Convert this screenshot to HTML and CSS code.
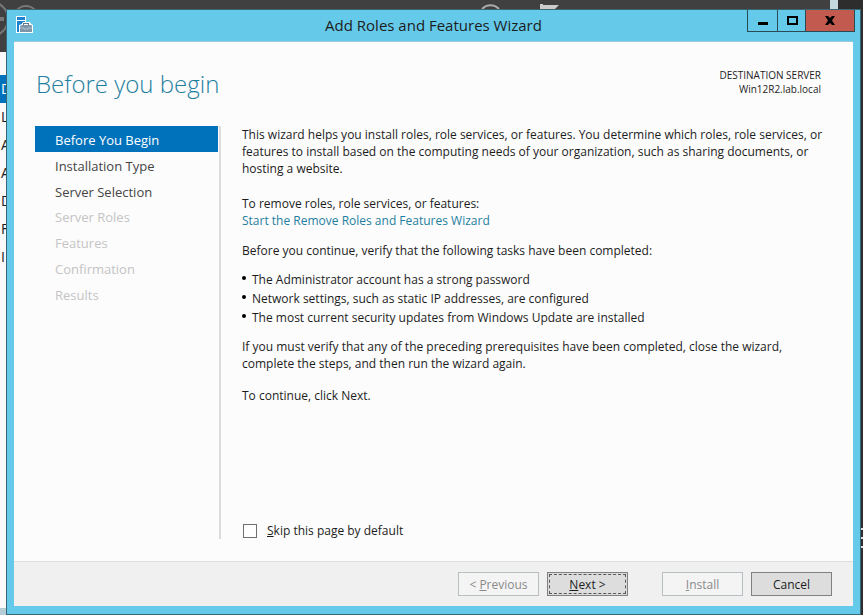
FILE: index.html
```html
<!DOCTYPE html>
<html lang="en">
<head>
<meta charset="utf-8">
<title>Add Roles and Features Wizard</title>
<meta name="viewport" content="width=device-width, initial-scale=1">
<link rel="stylesheet" href="styles.css">
</head>
<body>
<div class="backdrop" aria-hidden="true">
  <div class="backdrop-header">
    <svg class="backdrop-nav" viewBox="0 0 40 40" fill="none" stroke="#777">
      <circle cx="-9" cy="19" r="17" stroke-width="2"/>
      <path d="M-4 19H4" stroke-width="4"/>
      <circle cx="26" cy="18" r="12" stroke-width="2"/>
    </svg>
    <svg class="backdrop-tools" viewBox="0 0 90 12" fill="none">
      <path d="M2 9C7 4 14 4 19 9" stroke="#aaa" stroke-width="2"/>
      <path d="M60 4h3v1h16l-4 4H60z" fill="#ccc"/>
    </svg>
    <span class="backdrop-bar"></span>
  </div>
  <ul class="backdrop-list">
    <li class="selected">D</li><li>L</li><li>A</li><li>A</li><li>D</li><li>F</li><li>I</li>
  </ul>
  <div class="backdrop-status"></div>
  <div class="backdrop-edge"><i></i><i></i><i></i></div>
</div>

<main class="window">
  <header class="titlebar">
    <svg class="app-icon" viewBox="0 0 18 18">
      <path d="M0 0h10v6h-3v11H0z" fill="#fff"/>
      <path d="M1 1h8v3H1zM1 5h8v2H6v2H4v7H1z" fill="#1b83d0"/>
      <path d="M3 9l3-1 1-2h7l1 2 2 1v8H3z" fill="#fff"/>
      <path d="M4 10l2-1h9l1 1v6H4z" fill="#7c95a8"/>
      <path d="M7 9V7h6v2h-1V8H8v1z" fill="#607b90"/>
      <path d="M4 12h4v1h4v-1h4" fill="none" stroke="#b4c3ce"/>
    </svg>
    <h1 class="title">Add Roles and Features Wizard</h1>
    <div class="window-controls">
      <button class="control" aria-label="Minimize"><svg viewBox="0 0 12 12"><path d="M1 7h10v3H1z"/></svg></button>
      <button class="control maximize" aria-label="Maximize"><svg viewBox="0 0 12 12"><path d="M1 1h11v9H1zM3 3v5h7V3z" fill-rule="evenodd"/></svg></button>
      <button class="control close" aria-label="Close"><svg viewBox="0 0 12 12"><path d="M1 1h3l2 2 2-2h3L8 5.500l3 4.500H8L6 8l-2 2H1l3-4.500z"/></svg></button>
    </div>
  </header>

  <div class="client">
    <div class="page-head">
      <h2 class="page-title">Before you begin</h2>
      <p class="destination">DESTINATION SERVER<br>Win12R2.lab.local</p>
    </div>
    <div class="columns">
      <nav class="steps" aria-label="Wizard steps">
        <ol>
          <li class="current"><a href="#" aria-current="step">Before You Begin</a></li>
          <li><a href="#">Installation Type</a></li>
          <li><a href="#">Server Selection</a></li>
          <li class="pending">Server Roles</li>
          <li class="pending">Features</li>
          <li class="pending">Confirmation</li>
          <li class="pending">Results</li>
        </ol>
      </nav>
      <section class="content">
        <p class="intro">This wizard helps you install roles, role services, or features. You determine which roles, role services, or features to install based on the computing needs of your organization, such as sharing documents, or hosting a website.</p>
        <p class="remove">To remove roles, role services, or features:<br><a href="#">Start the Remove Roles and Features Wizard</a></p>
        <p>Before you continue, verify that the following tasks have been completed:</p>
        <ul class="tasks">
          <li>The Administrator account has a strong password</li>
          <li>Network settings, such as static IP addresses, are configured</li>
          <li>The most current security updates from Windows Update are installed</li>
        </ul>
        <p class="verify">If you must verify that any of the preceding prerequisites have been completed, close the wizard, complete the steps, and then run the wizard again.</p>
        <p>To continue, click Next.</p>
        <div class="skip">
          <input type="checkbox" id="skip">
          <label for="skip"><u>S</u>kip this page by default</label>
        </div>
      </section>
    </div>
    <footer class="actions">
      <div class="pair">
        <button class="btn" disabled>&lt; <u>P</u>revious</button>
        <button class="btn default"><u>N</u>ext &gt;</button>
      </div>
      <div class="pair">
        <button class="btn" disabled><u>I</u>nstall</button>
        <button class="btn">Cancel</button>
      </div>
    </footer>
  </div>
</main>
</body>
</html>
```
FILE: styles.css
```css
* {
  box-sizing: border-box;
}

body {
  margin: 0;
  min-height: 100vh;
  display: flex;
  padding: 9px 2px 0 6px;
  position: relative;
  overflow: hidden;
  font: 12px/17px "Open Sans", "Noto Sans", sans-serif;
  color: #1c1c1c;
  background: #f9f9f9;
}

h1, h2, p, ul, ol {
  margin: 0;
  padding: 0;
  font-weight: 400;
}

ul, ol {
  list-style: none;
}

a {
  color: inherit;
  text-decoration: none;
}

button, input {
  font: inherit;
  color: inherit;
  margin: 0;
}

/* Server Manager behind the wizard */
.backdrop {
  position: absolute;
  z-index: 0;
  inset: 0;
  display: flex;
  flex-direction: column;
}

.backdrop-header {
  position: relative;
  height: 52px;
  background: #404040;
}

.backdrop-nav {
  position: absolute;
  left: 0;
  top: 0;
  width: 40px;
  height: 40px;
}

.backdrop-tools {
  position: absolute;
  left: 480px;
  top: 0;
  width: 90px;
  height: 12px;
}

.backdrop-bar {
  position: absolute;
  right: 25px;
  top: 0;
  width: 8px;
  height: 12px;
  background: #c3d9df;
}

.backdrop-list {
  flex: 1;
  padding-top: 23px;
  font-size: 14px;
  line-height: 28px;
}

.backdrop-list li {
  padding-left: 1px;
}

.backdrop-list .selected {
  background: #0072bc;
  color: #fff;
}

.backdrop-status {
  height: 7px;
  background: #b5cdd4;
}

.backdrop-edge {
  position: absolute;
  right: 0;
  top: 0;
  bottom: 0;
  width: 25px;
  padding-top: 528px;
  background: #2d2d2d;
  display: flex;
  flex-direction: column;
  align-items: flex-end;
  gap: 7px;
}

.backdrop-edge i {
  width: 2px;
  height: 2px;
  background: #ddd;
}

/* Wizard window */
.window {
  position: relative;
  z-index: 1;
  flex: 1;
  display: flex;
  flex-direction: column;
  padding: 0 7px 8px;
  border: 1px solid #3b6673;
  background: #65caea;
}

.titlebar {
  display: grid;
  grid-template-columns: 1fr auto 1fr;
  height: 31px;
}

.app-icon {
  width: 18px;
  height: 18px;
  margin: 6px 0 0 2px;
}

.title {
  font-size: 15px;
  line-height: 30px;
}

.window-controls {
  display: flex;
  justify-self: end;
  height: 22px;
  margin-right: -2px;
  border: 1px solid #294b56;
  border-top: 0;
}

.control {
  width: 29px;
  padding: 0;
  border: 0;
  display: grid;
  place-items: center;
  background: #65caea;
}

.control svg {
  width: 12px;
  height: 12px;
}

.maximize {
  border: 1px solid #294b56;
  border-width: 0 1px;
}

.close {
  width: 48px;
  background: #c35a50;
}

.client {
  flex: 1;
  display: flex;
  flex-direction: column;
  background: #fcfcfc;
  border-top: 1px solid #9cc9d8;
}

.page-head {
  display: flex;
  justify-content: space-between;
  height: 84px;
  padding: 26px 32px 0 22px;
}

.page-title {
  font-size: 24px;
  line-height: 32px;
  font-weight: 300;
  color: #1f7f9f;
}

.destination {
  font-size: 10px;
  line-height: 14px;
  text-align: right;
}

.columns {
  flex: 1;
  display: flex;
  padding: 0 21px 22px;
}

.steps {
  width: 186px;
  flex: none;
  padding-right: 1px;
  border-right: 2px solid #dcdcdc;
}

.steps ol {
  display: grid;
  grid-auto-rows: 1fr;
  height: 181px;
}

.steps li {
  display: flex;
  align-items: center;
  padding: 3px 0 0 20px;
  font-size: 13px;
  color: #444;
}

.steps .current {
  background: #0072bc;
  color: #fff;
}

.steps .pending {
  color: #c4c4c4;
}

.content {
  flex: 1;
  display: flex;
  flex-direction: column;
  padding-left: 21px;
}

.content p {
  margin-bottom: 15px;
}

.content .intro {
  margin-bottom: 18px;
}

.content .remove {
  margin-bottom: 13px;
}

.content a {
  color: #1f7f9f;
}

.tasks {
  margin: -4px 0 11px;
  line-height: 19px;
}

.tasks li {
  display: flex;
  gap: 6px;
}

.tasks li::before {
  content: "";
  width: 4px;
  height: 4px;
  margin-top: 6px;
  border-radius: 50%;
  background: #000;
}

.skip {
  display: flex;
  align-items: center;
  gap: 10px;
  margin-top: auto;
  padding-left: 1px;
}

.skip input {
  appearance: none;
  width: 14px;
  height: 14px;
  border: 1px solid #707070;
  background: #fff;
}

.actions {
  display: flex;
  justify-content: flex-end;
  gap: 34px;
  padding: 10px 21px;
  border-top: 1px solid #dcdcdc;
  background: #f0f0f0;
}

.pair {
  display: flex;
  gap: 8px;
}

.btn {
  width: 81px;
  height: 24px;
  padding: 0;
  border: 1px solid #808080;
  background: #ddd;
}

.btn:disabled {
  border-color: #b8bfc2;
  background: #f4f4f4;
  color: #8a8a8a;
}

.default {
  outline: 1px dashed #555;
  outline-offset: -3px;
}
```
